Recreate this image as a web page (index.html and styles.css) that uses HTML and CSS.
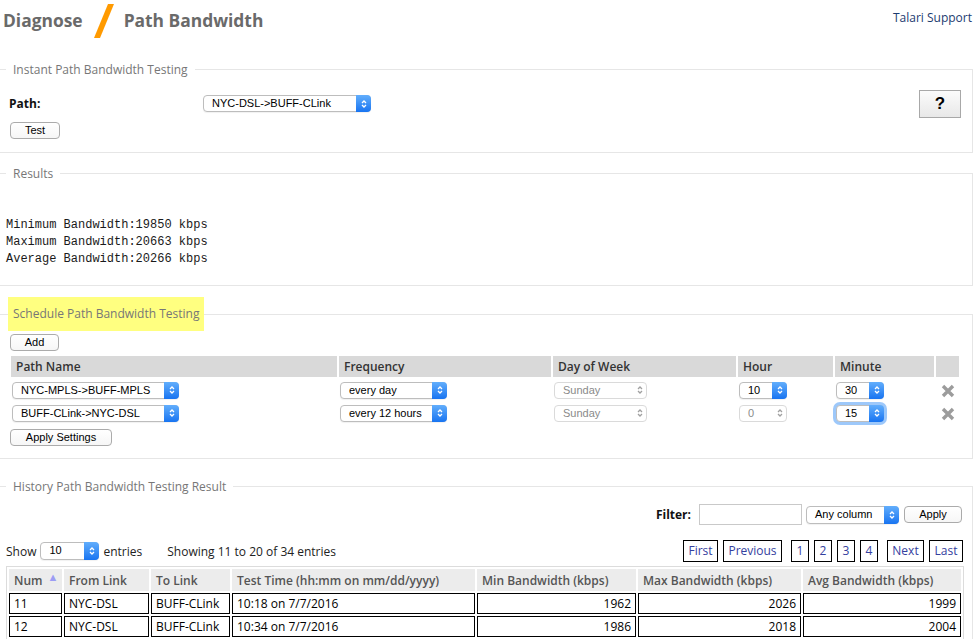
FILE: index.html
```html
<!DOCTYPE html>
<html>
<head>
<meta charset="utf-8">
<title>Path Bandwidth</title>
<link rel="stylesheet" href="styles.css">
</head>
<body>
<header class="top">
  <div class="crumbs">
    <span class="crumb">Diagnose</span>
    <svg class="slash" viewBox="0 0 20 34"><polygon points="14,0 20,0 6,34 0,34"/></svg>
    <span class="crumb">Path Bandwidth</span>
  </div>
  <a class="support" href="#">Talari Support</a>
</header>

<fieldset class="sec sec-instant">
  <legend>Instant Path Bandwidth Testing</legend>
  <div class="instant">
    <div class="instant-main">
      <div class="path-row">
        <span class="path-label">Path:</span>
        <span class="sel w-instant"><span class="sel-text">NYC-DSL-&gt;BUFF-CLink</span><span class="step"><svg viewBox="0 0 8 12"><path d="M2 5 L4 3 L6 5 M2 7 L4 9 L6 7"/></svg></span></span>
      </div>
      <button class="mbtn w-test">Test</button>
    </div>
    <button class="help">?</button>
  </div>
</fieldset>

<fieldset class="sec sec-results">
  <legend>Results</legend>
  <pre class="results">Minimum Bandwidth:19850 kbps
Maximum Bandwidth:20663 kbps
Average Bandwidth:20266 kbps</pre>
</fieldset>

<fieldset class="sec sec-sched">
  <legend class="hl">Schedule Path Bandwidth Testing</legend>
  <div class="sched-body">
    <button class="mbtn w-add">Add</button>
    <table class="sched">
      <colgroup>
        <col class="c-path"><col class="c-freq"><col class="c-day"><col class="c-hour"><col class="c-min"><col class="c-del">
      </colgroup>
      <thead>
        <tr><th>Path Name</th><th>Frequency</th><th>Day of Week</th><th>Hour</th><th>Minute</th><th></th></tr>
      </thead>
      <tbody>
        <tr>
          <td><span class="sel w-path"><span class="sel-text">NYC-MPLS-&gt;BUFF-MPLS</span><span class="step"><svg viewBox="0 0 8 12"><path d="M2 5 L4 3 L6 5 M2 7 L4 9 L6 7"/></svg></span></span></td>
          <td><span class="sel w-freq"><span class="sel-text">every day</span><span class="step"><svg viewBox="0 0 8 12"><path d="M2 5 L4 3 L6 5 M2 7 L4 9 L6 7"/></svg></span></span></td>
          <td><span class="sel dis w-day"><span class="sel-text">Sunday</span><span class="step"><svg viewBox="0 0 8 12"><path d="M2 5 L4 3 L6 5 M2 7 L4 9 L6 7"/></svg></span></span></td>
          <td><span class="sel w-hour"><span class="sel-text">10</span><span class="step"><svg viewBox="0 0 8 12"><path d="M2 5 L4 3 L6 5 M2 7 L4 9 L6 7"/></svg></span></span></td>
          <td><span class="sel w-min"><span class="sel-text">30</span><span class="step"><svg viewBox="0 0 8 12"><path d="M2 5 L4 3 L6 5 M2 7 L4 9 L6 7"/></svg></span></span></td>
          <td class="del"><svg class="x" viewBox="0 0 14 14"><path d="M2 2 L12 12 M12 2 L2 12"/></svg></td>
        </tr>
        <tr>
          <td><span class="sel w-path"><span class="sel-text">BUFF-CLink-&gt;NYC-DSL</span><span class="step"><svg viewBox="0 0 8 12"><path d="M2 5 L4 3 L6 5 M2 7 L4 9 L6 7"/></svg></span></span></td>
          <td><span class="sel w-freq"><span class="sel-text">every 12 hours</span><span class="step"><svg viewBox="0 0 8 12"><path d="M2 5 L4 3 L6 5 M2 7 L4 9 L6 7"/></svg></span></span></td>
          <td><span class="sel dis w-day"><span class="sel-text">Sunday</span><span class="step"><svg viewBox="0 0 8 12"><path d="M2 5 L4 3 L6 5 M2 7 L4 9 L6 7"/></svg></span></span></td>
          <td><span class="sel dis w-hour"><span class="sel-text">0</span><span class="step"><svg viewBox="0 0 8 12"><path d="M2 5 L4 3 L6 5 M2 7 L4 9 L6 7"/></svg></span></span></td>
          <td><span class="sel focus w-min"><span class="sel-text">15</span><span class="step"><svg viewBox="0 0 8 12"><path d="M2 5 L4 3 L6 5 M2 7 L4 9 L6 7"/></svg></span></span></td>
          <td class="del"><svg class="x" viewBox="0 0 14 14"><path d="M2 2 L12 12 M12 2 L2 12"/></svg></td>
        </tr>
      </tbody>
    </table>
    <button class="mbtn w-apply-set">Apply Settings</button>
  </div>
</fieldset>

<fieldset class="sec sec-hist">
  <legend>History Path Bandwidth Testing Result</legend>
  <div class="hist-body">
    <div class="filter-row">
      <span class="filter-label">Filter:</span>
      <span class="filter-input"></span>
      <span class="sel w-any"><span class="sel-text">Any column</span><span class="step"><svg viewBox="0 0 8 12"><path d="M2 5 L4 3 L6 5 M2 7 L4 9 L6 7"/></svg></span></span>
      <button class="mbtn w-apply">Apply</button>
    </div>
    <div class="show-row">
      <div class="show-left">
        <span>Show</span>
        <span class="sel w-show"><span class="sel-text">10</span><span class="step"><svg viewBox="0 0 8 12"><path d="M2 5 L4 3 L6 5 M2 7 L4 9 L6 7"/></svg></span></span>
        <span>entries</span>
        <span class="showing">Showing 11 to 20 of 34 entries</span>
      </div>
      <div class="pager">
        <div class="pgroup"><a class="pg pg-first">First</a><a class="pg pg-prev">Previous</a></div>
        <div class="pgroup"><a class="pg pg-n">1</a><a class="pg pg-n">2</a><a class="pg pg-n">3</a><a class="pg pg-n">4</a></div>
        <div class="pgroup"><a class="pg pg-next">Next</a><a class="pg pg-last">Last</a></div>
      </div>
    </div>
    <table class="hist">
      <colgroup>
        <col class="h-num"><col class="h-from"><col class="h-to"><col class="h-time"><col class="h-min"><col class="h-max"><col class="h-avg">
      </colgroup>
      <thead>
        <tr>
          <th>Num<span class="sort">&#9650;</span></th>
          <th>From Link</th><th>To Link</th><th>Test Time (hh:mm on mm/dd/yyyy)</th>
          <th>Min Bandwidth (kbps)</th><th>Max Bandwidth (kbps)</th><th>Avg Bandwidth (kbps)</th>
        </tr>
      </thead>
      <tbody>
        <tr><td>11</td><td>NYC-DSL</td><td>BUFF-CLink</td><td>10:18 on 7/7/2016</td><td class="num">1962</td><td class="num">2026</td><td class="num">1999</td></tr>
        <tr><td>12</td><td>NYC-DSL</td><td>BUFF-CLink</td><td>10:34 on 7/7/2016</td><td class="num">1986</td><td class="num">2018</td><td class="num">2004</td></tr>
      </tbody>
    </table>
  </div>
</fieldset>
</body>
</html>
```

FILE: styles.css
```css
* { box-sizing: border-box; }

body {
  margin: 0;
  width: 973px;
  font-family: "Open Sans", sans-serif;
  font-size: 12px;
  color: #222;
  background: #fff;
}

/* header */
.top {
  display: flex;
  justify-content: space-between;
  align-items: flex-start;
  height: 61px;
}
.crumbs {
  display: flex;
  align-items: center;
  height: 39px;
  padding-left: 3px;
}
.crumb {
  font-size: 17.4px;
  font-weight: 700;
  color: #6a6a6a;
}
.slash {
  width: 20px;
  height: 34px;
  margin: 2px 10px 0 11px;
  fill: #ff9a00;
}
.support {
  font-size: 12px;
  color: #1c3b70;
  text-decoration: none;
  margin-top: 9px;
  margin-right: 1px;
}

/* sections */
.sec {
  margin: 0;
  padding: 0;
  min-width: 0;
  border: 1px solid #e6e6e6;
  border-left: none;
}
.sec legend {
  margin-left: 6px;
  padding: 0 7px;
  font-size: 12px;
  line-height: 17px;
  color: #777;
}
.sec legend.hl {
  margin-left: 8px;
  padding: 8px 5px 9px;
  background: #ffff80;
  color: #777;
}

/* instant */
.instant {
  display: flex;
  justify-content: space-between;
  align-items: flex-start;
  padding: 12px 11px 13px 0;
}
.instant-main {
  display: flex;
  flex-direction: column;
  align-items: flex-start;
  padding-top: 5px;
}
.path-row {
  display: flex;
  align-items: center;
}
.path-label {
  width: 203px;
  padding-left: 9px;
  font-weight: 700;
  color: #111;
}
.help {
  width: 42px;
  height: 28px;
  border: 1px solid #a8a8a8;
  background: linear-gradient(#fbfbfb, #e8e8e8);
  font-family: "Liberation Sans", Arial, sans-serif;
  font-weight: 700;
  font-size: 17px;
  color: #000;
  padding: 0;
}

/* mac-like buttons */
.mbtn {
  height: 17px;
  padding: 0;
  border: 1px solid #ababab;
  border-radius: 4px;
  background: linear-gradient(#ffffff, #f6f6f6);
  font-family: "Liberation Sans", Arial, sans-serif;
  font-size: 11px;
  color: #000;
  line-height: 15px;
  margin-left: 10px;
}
.w-test { width: 50px; margin-top: 10px; }
.w-add { width: 49px; }
.w-apply-set { width: 102px; margin-top: 4px; }
.w-apply { width: 58px; margin-left: 5px; }

/* select look-alike */
.sel {
  display: inline-flex;
  align-items: stretch;
  height: 17px;
  border: 1px solid #bdbdbd;
  border-radius: 4px;
  background: #fff;
  font-family: "Liberation Sans", Arial, sans-serif;
  font-size: 11px;
  color: #000;
  box-shadow: 0 1px 1px rgba(0, 0, 0, 0.06);
  vertical-align: middle;
}
.sel-text {
  flex: 1;
  padding-left: 8px;
  line-height: 15px;
  white-space: nowrap;
  overflow: hidden;
}
.step {
  width: 15px;
  margin: -1px -1px -1px 0;
  border-radius: 0 4px 4px 0;
  background: linear-gradient(#62aefc, #1874f1);
  display: flex;
  align-items: center;
  justify-content: center;
}
.step svg {
  width: 8px;
  height: 12px;
  fill: none;
  stroke: #fff;
  stroke-width: 1.3;
}
.sel.dis {
  border-color: #dadada;
  color: #8a8a8a;
  box-shadow: none;
}
.sel.dis .step { background: none; }
.sel.dis .step svg { stroke: #a0a0a0; }
.sel.focus { box-shadow: 0 0 0 3px rgba(76, 154, 246, 0.55); }

.w-instant { width: 168px; }
.w-path { width: 167px; }
.w-freq { width: 107px; }
.w-day { width: 93px; }
.w-hour { width: 48px; }
.w-min { width: 48px; }
.w-any { width: 93px; height: 18px; }
.w-show { width: 59px; height: 18px; }

/* results */
.results {
  margin: 0;
  padding: 35px 0 17px 6px;
  font-family: "Liberation Mono", "Courier New", monospace;
  font-size: 12px;
  line-height: 17px;
  color: #1a1a1a;
}

/* schedule */
.sec-results { margin-top: 12px; }
.sec-sched { margin-top: 11px; }
.sched-body {
  display: flex;
  flex-direction: column;
  align-items: flex-start;
  padding: 3px 0 12px;
}
.sched {
  margin: 3px 0 0 9px;
  border-spacing: 2px;
  table-layout: fixed;
  width: 952px;
}
.c-path { width: 326px; }
.c-freq { width: 212px; }
.c-day { width: 183px; }
.c-hour { width: 95px; }
.c-min { width: 99px; }
.c-del { width: 23px; }
.sched th {
  height: 21px;
  padding: 0 5px;
  background: #d9d9d9;
  text-align: left;
  font-size: 12px;
  font-weight: 600;
  color: #333;
}
.sched td {
  height: 21px;
  padding: 0 1px;
  vertical-align: middle;
}
.sched td.del { text-align: center; }
.x {
  width: 14px;
  height: 14px;
  stroke: #9c9c9c;
  stroke-width: 3.4;
  display: inline-block;
  vertical-align: middle;
}

/* history */
.sec-hist { margin-top: 19px; }
.hist-body {
  display: flex;
  flex-direction: column;
  padding: 9px 0 0;
}
.filter-row {
  display: flex;
  justify-content: flex-end;
  align-items: center;
  padding-right: 10px;
  height: 21px;
}
.filter-label {
  font-weight: 700;
  color: #111;
  margin-right: 8px;
}
.filter-input {
  width: 103px;
  height: 21px;
  border: 1px solid #c9c9c9;
  margin-right: 4px;
}
.show-row {
  display: flex;
  justify-content: space-between;
  align-items: center;
  margin-top: 15px;
  height: 22px;
  padding: 0 9px 0 6px;
}
.show-left {
  display: flex;
  align-items: center;
  gap: 4px;
  font-size: 12px;
  color: #222;
}
.show-left .showing { margin-left: 21px; }
.pager {
  display: flex;
  gap: 9px;
}
.pgroup {
  display: flex;
  gap: 5px;
}
.pg {
  display: block;
  height: 22px;
  line-height: 20px;
  padding: 0;
  text-align: center;
  border: 1px solid #000;
  font-size: 12px;
  color: #34409e;
  white-space: nowrap;
}
.pg-first { width: 35px; }
.pg-prev { width: 59px; }
.pg-n { width: 18px; }
.pg-next { width: 37px; }
.pg-last { width: 34px; }
.hist {
  margin: 4px 0 0 6px;
  border: 1px solid #dcdcdc;
  border-spacing: 2px;
  table-layout: fixed;
  width: 958px;
}
.h-num { width: 53px; }
.h-from { width: 85px; }
.h-to { width: 79px; }
.h-time { width: 243px; }
.h-min { width: 159px; }
.h-max { width: 163px; }
.h-avg { width: 158px; }
.hist th {
  height: 22px;
  padding: 0 5px;
  background: #ececec;
  text-align: left;
  font-size: 12px;
  font-weight: 600;
  color: #555;
  white-space: nowrap;
}
.sort {
  display: inline-block;
  font-size: 11px;
  line-height: 10px;
  color: #9c9cf4;
  vertical-align: 4px;
  margin-left: 5px;
}
.hist td {
  height: 21px;
  padding: 0 4px;
  border: 1px solid #000;
  font-size: 12px;
  color: #000;
  white-space: nowrap;
}
.hist td.num { text-align: right; }
```
